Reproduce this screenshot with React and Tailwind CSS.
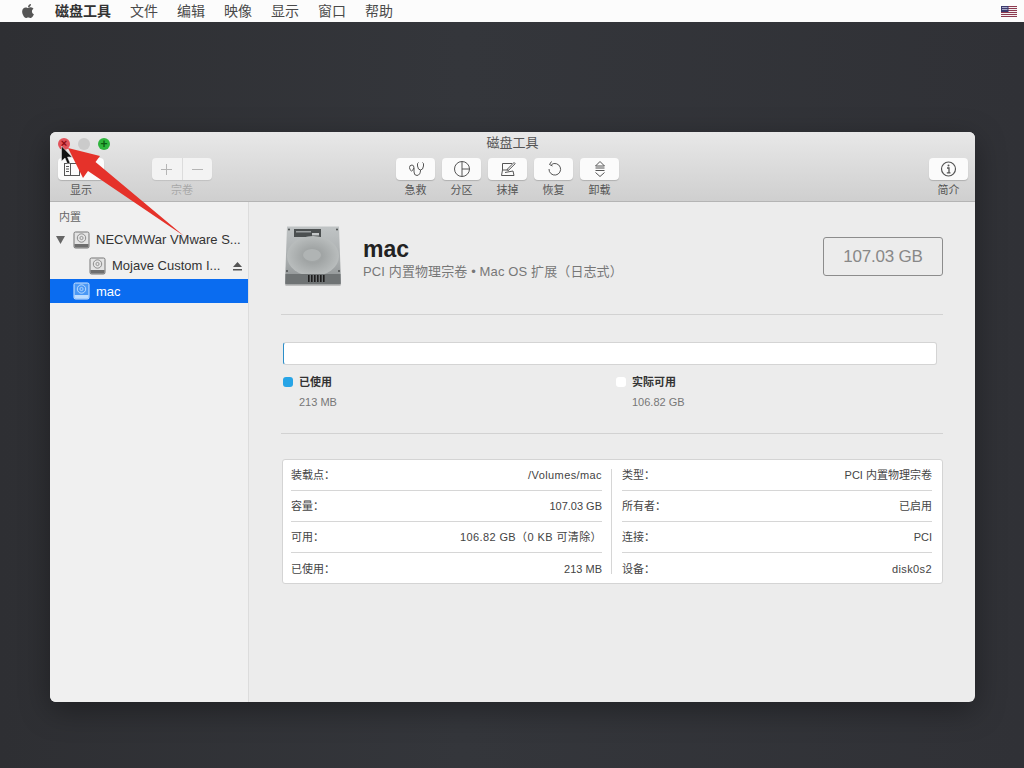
const FONT = "font-['Liberation_Sans','Noto_Sans_CJK_SC',sans-serif]";

function Flag() {
  return (
    <svg width="16" height="11" viewBox="0 0 16 11">
      <rect width="16" height="11" fill="#f4f1f2" />
      {[0, 2, 4, 6, 8, 10].map((y) => (
        <rect key={y} y={y} width="16" height="1" fill="#8d3a50" />
      ))}
      <rect width="7.5" height="6" fill="#3c3b6e" />
      <rect x="1" y="1" width="5.5" height="1" fill="#a9a9c8" />
      <rect x="1" y="3" width="5.5" height="1" fill="#a9a9c8" />
    </svg>
  );
}

function Apple() {
  return (
    <svg width="14" height="16" viewBox="0 0 384 512" fill="#555">
      <path d="M318.7 268.7c-.2-36.7 16.4-64.4 50-84.8-18.8-26.9-47.2-41.7-84.7-44.6-35.5-2.8-74.3 20.7-88.5 20.7-15 0-49.4-19.7-76.4-19.7C63.3 141.2 4 184.8 4 273.5q0 39.3 14.4 81.2c12.8 36.7 59 126.7 107.2 125.2 25.2-.6 43-17.9 75.8-17.9 31.8 0 48.3 17.9 76.4 17.9 48.6-.7 90.4-82.5 102.6-119.3-65.2-30.7-61.7-90-61.7-91.9zm-56.6-164.2c27.3-32.4 24.8-61.9 24-72.5-24.1 1.4-52 16.4-67.9 34.9-17.5 19.8-27.8 44.3-25.6 71.9 26.1 2 49.9-11.4 69.5-34.3z" />
    </svg>
  );
}

function ToolIcon({ children, color = "#555" }) {
  return (
    <svg width="18" height="18" viewBox="0 0 18 18" fill="none" stroke={color} strokeWidth="1">
      {children}
    </svg>
  );
}

function ToolButton({ label, children }) {
  return (
    <div className="flex w-[39px] flex-col items-center">
      <div className="flex h-[22px] w-[39px] items-center justify-center rounded-[4px] bg-[#fbfbfb] shadow-[0_1px_1px_rgba(0,0,0,0.18)]">
        {children}
      </div>
      <span className="mt-[3px] whitespace-nowrap text-[11px] leading-[15px] text-[#555]">{label}</span>
    </div>
  );
}

function SmallDisk({ selected }) {
  const stroke = selected ? "#cfe6ff" : "#777";
  const fill = selected ? "#4a98f5" : "#e4e4e4";
  return (
    <svg width="17" height="18" viewBox="0 0 17 18" className="shrink-0">
      <rect x="1" y="1" width="15" height="16" rx="1.5" fill={fill} stroke={stroke} />
      <circle cx="8.5" cy="7" r="4.2" fill="none" stroke={stroke} strokeWidth="0.8" />
      <circle cx="8.5" cy="7" r="1.6" fill="none" stroke={stroke} strokeWidth="0.7" />
      <rect x="1.5" y="13" width="14" height="3.5" fill={selected ? "#bcdcff" : "#6e6e6e"} />
    </svg>
  );
}

function BigDisk() {
  return (
    <svg width="60" height="62" viewBox="0 0 60 62" className="shrink-0">
      <defs>
        <linearGradient id="hd" x1="0" y1="0" x2="0" y2="1">
          <stop offset="0" stopColor="#c0c4c5" />
          <stop offset="0.6" stopColor="#a8acad" />
          <stop offset="1" stopColor="#8a8e8f" />
        </linearGradient>
        <radialGradient id="pl" cx="0.5" cy="0.5" r="0.5">
          <stop offset="0" stopColor="#a9adad" />
          <stop offset="0.35" stopColor="#a0a4a4" />
          <stop offset="1" stopColor="#b9bdbd" />
        </radialGradient>
      </defs>
      <rect x="2" y="58" width="56" height="3" rx="1.5" fill="#00000030" />
      <path d="M4 1.5 H56 L58 58 Q58 59.5 56 59.5 H4 Q2 59.5 2 58 Z" fill="url(#hd)" />
      <rect x="11" y="4" width="27" height="8" fill="#4b4f50" />
      <rect x="13" y="6" width="15" height="1.5" fill="#9a9e9f" />
      <rect x="29" y="8" width="7" height="2.5" fill="#c4c7c8" />
      <ellipse cx="30" cy="31" rx="26" ry="20" fill="url(#pl)" />
      <ellipse cx="29" cy="30" rx="9" ry="6" fill="#b0b4b4" />
      <rect x="2.5" y="49" width="55" height="10" fill="#6f7374" />
      <g fill="#1e1e1e">
        <rect x="25" y="50" width="1.6" height="7" />
        <rect x="28" y="50" width="1.6" height="7" />
        <rect x="31" y="50" width="1.6" height="7" />
        <rect x="34" y="50" width="1.6" height="7" />
        <rect x="37" y="50" width="1.6" height="7" />
        <rect x="40" y="50" width="1.6" height="7" />
      </g>
      <g fill="#4a4d4e">
        <circle cx="6" cy="4.5" r="1" />
        <circle cx="54" cy="4.5" r="1" />
        <circle cx="4" cy="46" r="1" />
        <circle cx="56" cy="46" r="1" />
      </g>
    </svg>
  );
}

function Row({ label, value, last, wide }) {
  return (
    <div className={`flex h-[31px] items-center justify-between pt-[1px] text-[11px] text-[#444] ${last ? "" : "border-b border-[#d6d6d6]"}`}>
      <span>{label}</span>
      <span className={wide ? "tracking-[0.4px]" : ""}>{value}</span>
    </div>
  );
}

export default function App() {
  return (
    <div className={`relative flex h-[768px] w-[1024px] flex-col overflow-hidden bg-[#303136] ${FONT}`}>
      <header className="flex h-[22px] shrink-0 items-center bg-[#fcfcfc] text-[14px] text-[#4a4a4a]">
        <div className="ml-[21px] mr-[20px] flex w-[14px] justify-center"><Apple /></div>
        <span className="mr-[19px] font-bold text-[#333]">磁盘工具</span>
        <div className="flex gap-[19px]">
          {["文件", "编辑", "映像", "显示", "窗口", "帮助"].map((m) => (
            <span key={m}>{m}</span>
          ))}
        </div>
        <div className="ml-auto mr-[7px]"><Flag /></div>
      </header>

      <main className="flex flex-1 flex-col bg-[linear-gradient(90deg,#2e2f33,#34363b_45%,#303136)] pl-[50px] pt-[110px]">
        <section className="flex h-[570px] w-[925px] flex-col overflow-hidden rounded-[6px] bg-[#ececec] shadow-[0_8px_30px_rgba(0,0,0,0.35)]">
          <div className="h-[70px] shrink-0 border-b border-[#b4b4b4] bg-[linear-gradient(#e8e8e8,#cfcfcf)]">
            <div className="grid h-[26px] grid-cols-[1fr_auto_1fr] items-center px-[8px]">
              <div className="flex items-center gap-[8px] pb-[3px]">
                <span className="flex h-[12px] w-[12px] items-center justify-center rounded-full bg-[#e2525a] text-[11px] font-bold leading-none text-[#8d0b12]">×</span>
                <span className="h-[12px] w-[12px] rounded-full bg-[#cbcbcb]" />
                <span className="flex h-[12px] w-[12px] items-center justify-center rounded-full bg-[#2fb53d] text-[12px] font-bold leading-none text-[#0b5e12]">+</span>
              </div>
              <span className="pb-[4px] text-[13px] text-[#555]">磁盘工具</span>
              <span />
            </div>
            <div className="flex pl-[8px] pr-[7px]">
              <div className="flex w-[46px] flex-col items-center">
                <div className="flex h-[22px] w-[46px] items-center rounded-[4px] bg-[#fbfbfb] pl-[6px] shadow-[0_1px_1px_rgba(0,0,0,0.18)]">
                  <svg width="16" height="13" viewBox="0 0 16 13" fill="none" stroke="#555">
                    <rect x="0.5" y="0.5" width="15" height="12" />
                    <path d="M6.5 0.5 V12.5 M2 3.5 H5 M2 6 H5 M2 8.5 H5" />
                  </svg>
                </div>
                <span className="mt-[3px] text-[11px] leading-[15px] text-[#555]">显示</span>
              </div>
              <div className="ml-[48px] flex w-[60px] flex-col items-center">
                <div className="flex h-[22px] w-[60px] rounded-[4px] bg-[#f3f3f3] shadow-[0_1px_1px_rgba(0,0,0,0.1)]">
                  <div className="flex flex-1 items-center justify-center border-r border-[#dcdcdc]">
                    <svg width="11" height="11" viewBox="0 0 11 11" stroke="#b5b5b5"><path d="M5.5 0 V11 M0 5.5 H11" /></svg>
                  </div>
                  <div className="flex flex-1 items-center justify-center">
                    <svg width="11" height="11" viewBox="0 0 11 11" stroke="#b5b5b5"><path d="M0 5.5 H11" /></svg>
                  </div>
                </div>
                <span className="mt-[3px] text-[11px] leading-[15px] text-[#a8a8a8]">宗卷</span>
              </div>
              <div className="ml-[184px] flex gap-[7px]">
                <ToolButton label="急救">
                  <ToolIcon>
                    <path d="M11.5 2.5 Q10 3 10.5 6 Q11 10 13.5 10 Q16 10 16.5 6 Q17 3 15.5 2.5 M13.5 10 Q13.5 15 10 15.5 Q7 15.5 7 12 V8 Q7 5 5 5 Q2.5 5 2.5 7.5 Q2.5 10 4.5 11 Q6.5 10 6.8 8" />
                  </ToolIcon>
                </ToolButton>
                <ToolButton label="分区">
                  <ToolIcon>
                    <circle cx="9" cy="9" r="7.5" />
                    <path d="M9 1.5 V16.5 M9 9 H16.5" />
                  </ToolIcon>
                </ToolButton>
                <ToolButton label="抹掉">
                  <ToolIcon>
                    <path d="M3.5 3.5 H13 M3.5 3.5 V10 L2.5 15.5 H15 L14 11 M3.5 10 H9.5 M6 12.5 L14 11" />
                    <path d="M8 9.5 L15 2.5 L16.2 3.7 L9.3 10.5 Z" />
                  </ToolIcon>
                </ToolButton>
                <ToolButton label="恢复">
                  <ToolIcon>
                    <path d="M6.5 4.5 A5.8 5.8 0 1 1 4 9" />
                    <path d="M6.5 1.5 L4.5 4.5 L7.5 6" />
                  </ToolIcon>
                </ToolButton>
                <ToolButton label="卸载">
                  <ToolIcon>
                    <path d="M9 1.5 L13.5 6 H4.5 Z M4.5 8 H13.5 M4.5 10.5 H13.5 M4.5 12.5 L9 16.5 L13.5 12.5" />
                  </ToolIcon>
                </ToolButton>
              </div>
              <div className="ml-auto">
                <ToolButton label="简介">
                  <ToolIcon>
                    <circle cx="8.5" cy="9" r="7" strokeWidth="1.2" />
                    <path d="M7 8 H9 V12.5 M6.8 12.8 H10.5" strokeWidth="1.3" />
                    <circle cx="8.5" cy="5.5" r="1" fill="#555" stroke="none" />
                  </ToolIcon>
                </ToolButton>
              </div>
            </div>
          </div>

          <div className="flex min-h-0 flex-1">
            <aside className="w-[199px] shrink-0 border-r border-[#dcdcdc] bg-[#f0f0f0]">
              <div className="pl-[9px] pt-[9px] text-[11px] leading-[13px] text-[#666]">内置</div>
              <div className="mt-[3px] flex h-[26px] items-center text-[13px] text-[#333]">
                <svg width="9" height="8" viewBox="0 0 9 8" fill="#666" className="ml-[6px] mr-[8px]"><path d="M0 0 H9 L4.5 8 Z" /></svg>
                <SmallDisk />
                <span className="ml-[6px] whitespace-nowrap">NECVMWar VMware S...</span>
              </div>
              <div className="flex h-[26px] items-center text-[13px] text-[#333]">
                <div className="ml-[39px]"><SmallDisk /></div>
                <span className="ml-[6px] whitespace-nowrap">Mojave Custom I...</span>
                <svg width="9" height="9" viewBox="0 0 9 9" fill="#555" className="ml-[13px]"><path d="M4.5 0 L9 5 H0 Z M0 7 H9 V8.5 H0 Z" /></svg>
              </div>
              <div className="flex h-[24px] items-center bg-[#0a6cf0] text-[13px] text-white">
                <div className="ml-[23px]"><SmallDisk selected /></div>
                <span className="ml-[6px] pt-[1px]">mac</span>
              </div>
            </aside>

            <div className="flex-1 pl-[32px] pr-[32px] pt-[23px]">
              <div className="flex h-[90px] border-b border-[#d2d2d2]">
                <div className="ml-[2px]"><BigDisk /></div>
                <div className="ml-[20px] pt-[9px]">
                  <div className="text-[23px] font-bold leading-[30px] text-[#222]">mac</div>
                  <div className="text-[13px] leading-[15px] tracking-[0.12px] text-[#777]">PCI 内置物理宗卷 • Mac OS 扩展（日志式）</div>
                </div>
                <div className="ml-auto mt-[12px] flex h-[39px] w-[120px] items-center justify-center rounded-[3px] border border-[#8c8c8c] text-[17px] tracking-[-0.2px] text-[#888]">107.03 GB</div>
              </div>

              <div className="ml-[2px] mt-[27px] h-[23px] w-[654px] rounded-[3px] border border-[#d4d4d4] border-l-[#2c8ec9] bg-white" />
              <div className="flex h-[69px] border-b border-[#d2d2d2] pt-[11px]">
                <div className="ml-[2px] w-[333px]">
                  <div className="flex items-center gap-[6px] text-[11px] font-bold leading-[12px] text-[#333]">
                    <span className="h-[10px] w-[10px] rounded-[3px] bg-[#27a4e6]" />已使用
                  </div>
                  <div className="ml-[16px] mt-[8px] text-[11px] leading-[12px] text-[#777]">213 MB</div>
                </div>
                <div>
                  <div className="flex items-center gap-[6px] text-[11px] font-bold leading-[12px] text-[#333]">
                    <span className="h-[10px] w-[10px] rounded-[3px] bg-white" />实际可用
                  </div>
                  <div className="ml-[16px] mt-[8px] text-[11px] leading-[12px] text-[#777]">106.82 GB</div>
                </div>
              </div>

              <div className="ml-[1px] mt-[25px] flex h-[125px] w-[661px] rounded-[3px] border border-[#d4d4d4] bg-white">
                <div className="w-[328px] pl-[8px] pr-[9px]">
                  <Row label="装载点：" value="/Volumes/mac" wide />
                  <Row label="容量：" value="107.03 GB" />
                  <Row label="可用：" value="106.82 GB（0 KB 可清除）" wide />
                  <Row label="已使用：" value="213 MB" last />
                </div>
                <div className="my-[9px] w-px bg-[#d6d6d6]" />
                <div className="flex-1 pl-[10px] pr-[10px]">
                  <Row label="类型：" value="PCI 内置物理宗卷" />
                  <Row label="所有者：" value="已启用" />
                  <Row label="连接：" value="PCI" />
                  <Row label="设备：" value="disk0s2" last wide />
                </div>
              </div>
            </div>
          </div>
        </section>
      </main>

      <svg className="pointer-events-none absolute left-0 top-0" width="1024" height="768" viewBox="0 0 1024 768">
        <path d="M184 236 L95.5 162 L100 156 L68 148 L83 178 L88 171 Z" fill="#e5322a" />
        <path d="M61.5 146 V161 L65 158 L67.5 164 L70 163 L67.5 157 L72 157 Z" fill="#111" stroke="#eee" strokeWidth="0.5" />
      </svg>
    </div>
  );
}
